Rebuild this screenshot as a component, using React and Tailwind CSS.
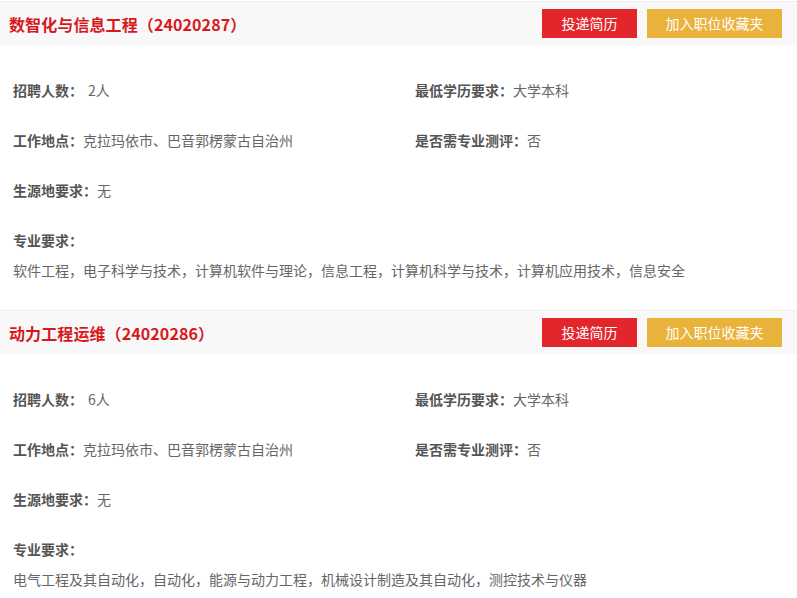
import React from "react";

const jobs = [
  {
    title: "数智化与信息工程（24020287）",
    count: "2人",
    edu: "大学本科",
    place: "克拉玛依市、巴音郭楞蒙古自治州",
    eval: "否",
    origin: "无",
    majors:
      "软件工程，电子科学与技术，计算机软件与理论，信息工程，计算机科学与技术，计算机应用技术，信息安全",
  },
  {
    title: "动力工程运维（24020286）",
    count: "6人",
    edu: "大学本科",
    place: "克拉玛依市、巴音郭楞蒙古自治州",
    eval: "否",
    origin: "无",
    majors:
      "电气工程及其自动化，自动化，能源与动力工程，机械设计制造及其自动化，测控技术与仪器",
  },
];

function Field({ label, value, gap }) {
  return (
    <div className="flex items-center h-[50px] leading-[20px] whitespace-pre">
      <span className="font-bold text-[#555]">{label}</span>
      <span className={gap ? "text-[#666] ml-[5px]" : "text-[#666]"}>{value}</span>
    </div>
  );
}

function Card({ job }) {
  return (
    <div className="pb-[30px]">
      <div className="h-[44px] border-t border-[#eeeeee] bg-[#f8f8f8] flex items-center justify-between pl-[9px] pr-[15px]">
        <h2 className="text-[16px] font-bold text-[#d9181e] leading-[20px] tracking-[0.1px]">{job.title}</h2>
        <div className="flex gap-[10px]">
          <button className="w-[95px] h-[29px] bg-[#e3262c] text-white text-[14px] leading-[29px]">投递简历</button>
          <button className="w-[135px] h-[29px] bg-[#e9b23b] text-white text-[14px] leading-[29px]">加入职位收藏夹</button>
        </div>
      </div>
      <div className="pl-[13px] pt-[20px] text-[14px]">
        <div className="grid grid-cols-[402px_1fr]">
          <Field label="招聘人数：" value={job.count} gap />
          <Field label="最低学历要求：" value={job.edu} />
          <Field label="工作地点：" value={job.place} />
          <Field label="是否需专业测评：" value={job.eval} />
          <Field label="生源地要求：" value={job.origin} />
        </div>
        <div className="mt-[15px] leading-[20px] font-bold text-[#555]">专业要求：</div>
        <div className="mt-[10px] leading-[20px] text-[#666]">{job.majors}</div>
      </div>
    </div>
  );
}

export default function App() {
  return (
    <div
      className="w-[797px] bg-white pt-[1px]"
      style={{ fontFamily: '"Microsoft YaHei", "Noto Sans CJK SC", sans-serif' }}
    >
      {jobs.map((j) => (
        <Card key={j.title} job={j} />
      ))}
    </div>
  );
}
